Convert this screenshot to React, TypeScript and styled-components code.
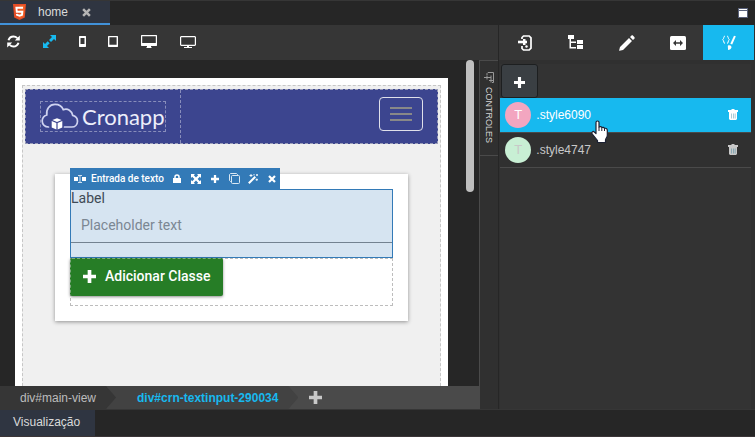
import React from "react";
import styled, { createGlobalStyle, css } from "styled-components";

const UI_FONT = '"Liberation Sans", Arial, sans-serif';
const APP_FONT = 'Roboto, "Open Sans", sans-serif';

const GlobalStyle = createGlobalStyle`
  *, *::before, *::after { box-sizing: border-box; }
  body { margin: 0; background: #262626; font-family: ${UI_FONT}; font-size: 12px; }
  button { font: inherit; color: inherit; border: 0; padding: 0; background: none; cursor: pointer; }
  svg { display: block; flex: none; }
`;

const Shell = styled.div`
  display: flex;
  flex-direction: column;
  height: 100vh;
  min-height: 400px;
  background: #262626;
  border-top: 1px solid #363636;
  border-bottom: 1px solid #3b3537;
  overflow: hidden;
`;

/* File tabs */
const FileBar = styled.header`
  display: flex;
  justify-content: space-between;
  align-items: stretch;
  height: 24px;
  flex: none;
  padding-right: 7px;
`;

const FileTab = styled.div`
  display: flex;
  align-items: center;
  height: 24px;
  padding: 0 19px 0 13px;
  background: #2f3541;
  border-bottom: 2px solid #4192d9;
  color: #dadada;
`;

const FileName = styled.span`
  margin: 0 14px 0 12px;
  line-height: 20px;
`;

const CloseButton = styled.button`
  color: #b5b5b5;
`;

const WindowButton = styled.button`
  align-self: center;
`;

/* Workspace */
const Workspace = styled.main`
  display: flex;
  flex: 1;
  min-height: 0;
  border-bottom: 1px solid #363636;
`;

const Editor = styled.section`
  display: flex;
  flex-direction: column;
  flex: 1;
  min-width: 0;
`;

const DeviceBar = styled.div`
  display: flex;
  align-items: center;
  gap: 19px;
  height: 35px;
  flex: none;
  padding: 0 0 2px 6px;
  background: #363636;
`;

const DeviceButton = styled.button<{ $active?: boolean; $width: number }>`
  display: flex;
  justify-content: center;
  align-items: center;
  width: ${(p) => p.$width}px;
  height: 24px;
  color: ${(p) => (p.$active ? "#17b9ef" : "#fff")};
`;

const EditorBody = styled.div`
  display: flex;
  flex: 1;
  min-height: 0;
`;

const CanvasColumn = styled.div`
  display: flex;
  flex-direction: column;
  flex: 1;
  min-width: 0;
`;

const Canvas = styled.div`
  display: flex;
  flex: 1;
  min-height: 0;
  overflow: hidden;
  padding-left: 15px;
`;

const Page = styled.div`
  display: flex;
  flex: 1;
  margin-top: 18px;
  padding: 7px 7px 0;
  background: #fff;
  font-family: ${APP_FONT};
`;

const View = styled.div`
  flex: 1;
  padding: 3px 2px;
  background: #f0f0f0;
  border: 1px dashed #c6c6c6;
  border-bottom: 0;
`;

const ScrollTrack = styled.div`
  width: 31px;
  padding-left: 18px;
`;

const ScrollThumb = styled.div`
  width: 8px;
  height: 132px;
  border-radius: 4px;
  background: #bfbfbf;
`;

const NavBar = styled.nav`
  display: flex;
  align-items: stretch;
  justify-content: space-between;
  height: 55px;
  background: #3c458f;
  border: 1px dashed #9a9db8;
`;

const BrandCell = styled.div`
  display: flex;
  align-items: center;
  padding: 0 14px;
  border-right: 1px dashed #888dbb;
`;

const Brand = styled.a`
  display: flex;
  align-items: center;
  gap: 3px;
  height: 31px;
  border: 1px dashed #888dbb;
  color: #eceefa;
  text-decoration: none;
`;

const BrandName = styled.span`
  font: 400 22px/28px Lato, sans-serif;
`;

const MenuButton = styled.button`
  display: flex;
  flex-direction: column;
  align-items: center;
  justify-content: center;
  gap: 4px;
  align-self: center;
  width: 44px;
  height: 34px;
  margin: 0 14px 5px 0;
  border: 1px solid #dfe0ea;
  border-radius: 4px;
`;

const MenuLine = styled.span`
  width: 22px;
  height: 2px;
  background: #888;
`;

const Card = styled.div`
  position: relative;
  margin: 30px 30px 0;
  padding: 15px;
  background: #fff;
  box-shadow: 0 1px 4px rgba(0, 0, 0, 0.4);
`;

const SelectionBar = styled.div`
  position: absolute;
  left: 15px;
  bottom: 100%;
  margin-bottom: -15px;
  display: flex;
  align-items: center;
  height: 21px;
  padding: 0 2px 0 4px;
  gap: 8px;
  background: #337ab7;
  color: #fff;
  font-size: 10px;
  font-weight: 500;
  white-space: nowrap;
`;

const SelectionName = styled.span`
  display: flex;
  align-items: center;
  gap: 5px;
`;

const SelectionButton = styled.button`
  display: flex;
  justify-content: center;
  width: 11px;
`;

const Field = styled.div`
  height: 69px;
  padding-bottom: 14px;
  background: #d6e4f1;
  border: 1px solid #337ab7;
  font-size: 14px;
`;

const FieldLabel = styled.label`
  display: block;
  line-height: 17px;
  color: #3f4a56;
`;

const FieldInput = styled.input`
  display: block;
  width: 100%;
  height: 36px;
  padding: 0 10px;
  border: 0;
  border-bottom: 1px solid #738290;
  border-radius: 0;
  background: none;
  outline: 0;
  font: 14px ${APP_FONT};
  color: #3f4a56;
  &::placeholder {
    color: #7b8793;
    opacity: 1;
  }
`;

const ActionArea = styled.div`
  height: 48px;
  border: 1px dashed #bdbdbd;
`;

const ActionButton = styled.button`
  display: flex;
  align-items: center;
  gap: 9px;
  height: 38px;
  margin: -1px 0 0 -1px;
  padding: 0 11px 2px 12px;
  border: 1px dashed transparent;
  border-left-color: #7fa87f;
  border-top-color: #7fa87f;
  border-radius: 2px;
  background: #267d26;
  color: #fff;
  font-size: 14px;
  font-weight: 500;
  box-shadow: 0 1px 3px rgba(0, 0, 0, 0.45);
`;

/* Breadcrumbs */
const Crumbs = styled.nav`
  display: flex;
  align-items: stretch;
  height: 23px;
  flex: none;
  background: #4a4a4a;
`;

const Crumb = styled.a<{ $current?: boolean }>`
  display: flex;
  align-items: center;
  text-decoration: none;
  clip-path: polygon(0 0, calc(100% - 10px) 0, 100% 50%, calc(100% - 10px) 100%, 0 100%);
  ${(p) =>
    p.$current
      ? css`
          margin-left: -10px;
          padding: 0 20px 0 31px;
          background: #424242;
          color: #17b9ef;
          font-weight: 700;
        `
      : css`
          z-index: 1;
          padding: 0 20px;
          background: #363636;
          color: #bdbdbd;
        `}
`;

const AddCrumb = styled.button`
  margin-left: 11px;
  color: #c8c8c8;
`;

/* Collapsed side strip */
const SideStrip = styled.aside`
  width: 19px;
  flex: none;
  background: #303030;
  border-left: 1px solid #4a4a4a;
`;

const StripTab = styled.button`
  display: flex;
  flex-direction: column;
  align-items: center;
  gap: 3px;
  width: 18px;
  height: 96px;
  padding-top: 11px;
  border-top: 1px solid #4a4a4a;
  border-bottom: 1px solid #4a4a4a;
  color: #d4d4d4;
  font-size: 9px;
`;

const StripLabel = styled.span`
  writing-mode: vertical-rl;
  line-height: 12px;
`;

/* Inspector */
const Inspector = styled.aside`
  display: flex;
  flex-direction: column;
  width: 34%;
  flex: none;
  background: #303030;
  border-left: 1px solid #262626;
  border-right: 1px solid #303030;
`;

const InspectorTabs = styled.div`
  display: grid;
  grid-template-columns: repeat(5, 1fr);
  height: 35px;
  flex: none;
  background: #363636;
`;

const InspectorTab = styled.button<{ $active?: boolean }>`
  display: flex;
  align-items: center;
  justify-content: center;
  color: #fff;
  background: ${(p) => (p.$active ? "#17b9ef" : "transparent")};
`;

const StylePanel = styled.div`
  flex: 1;
  margin: 4px 3px 0 1px;
  background: #333;
`;

const AddStyle = styled.button`
  display: flex;
  align-items: center;
  justify-content: center;
  width: 37px;
  height: 34px;
  margin-left: 1px;
  padding-top: 2px;
  border: 1px solid #1d1f20;
  border-radius: 3px;
  background: #3a3f43;
  color: #fff;
`;

const StyleList = styled.ul`
  margin: 0;
  padding: 0;
  list-style: none;
`;

const StyleRow = styled.li<{ $active?: boolean }>`
  position: relative;
  display: flex;
  align-items: center;
  height: 35px;
  padding: 0 13px 1px 5px;
  border-bottom: 1px solid #4a4a4a;
  background: ${(p) => (p.$active ? "#17b9ef" : "#303030")};
  color: ${(p) => (p.$active ? "#fff" : "#c8c8c8")};
`;

const Swatch = styled.span<{ $color: string }>`
  display: flex;
  align-items: center;
  justify-content: center;
  width: 26px;
  height: 26px;
  padding-bottom: 1px;
  margin-right: 5px;
  border-radius: 50%;
  background: ${(p) => p.$color};
  font-size: 13px;
`;

const StyleName = styled.span`
  flex: 1;
`;

const Pointer = styled.svg`
  position: absolute;
  left: 91px;
  top: 22px;
  z-index: 2;
  pointer-events: none;
`;

/* Bottom dock */
const Dock = styled.footer`
  display: flex;
  height: 26px;
  flex: none;
`;

const DockTab = styled.button`
  padding: 0 15px 2px 13px;
  background: #2f3541;
  color: #dadada;
`;

const HtmlIcon = () => (
  <svg width="13" height="16" viewBox="0 0 13 16">
    <path d="M0 0h13l-1.2 13.6L6.5 16l-5.3-2.4z" fill="#e44d26" />
    <path d="M6.5 1.3h5.2l-1 11.3-4.2 1.9z" fill="#f16529" />
    <path d="M10 3.8H3.4l.4 4h5.500l-.3 3-2.500.9-2.500-.9-.1-1" fill="none" stroke="#fff" strokeWidth="1.9" />
  </svg>
);

const WindowIcon = () => (
  <svg width="10" height="10" viewBox="0 0 10 10">
    <rect width="10" height="10" fill="#59617a" />
    <path d="M1 1h8v1H1zM1 3h8v6H1z" fill="#fff" />
  </svg>
);

const RefreshIcon = () => (
  <svg width="13" height="13" viewBox="0 0 13 13">
    <path d="M1.500 5.300C2.300 2.800 4.200 1.500 6.500 1.500c1.500 0 2.800.6 3.800 1.600M11.500 7.700c-.8 2.500-2.700 3.800-5 3.800-1.500 0-2.800-.6-3.800-1.600" fill="none" stroke="currentColor" strokeWidth="2" />
    <path d="M12.800.5v5H7.800zM.2 12.500v-5h5z" fill="currentColor" />
  </svg>
);

const ExpandIcon = () => (
  <svg width="13" height="13" viewBox="0 0 13 13" fill="currentColor">
    <path d="M7 0h6v6l-2-2-3 3-2-2 3-3zM6 13H0V7l2 2 2.700-2.700 2 2L4 11z" />
  </svg>
);

const PhoneIcon = () => (
  <svg width="7" height="11" viewBox="0 0 7 11">
    <path fill="currentColor" fillRule="evenodd" d="M.5 0h6l.5.5v10l-.5.5h-6L0 10.500V.5zM1.500 2v6h4V2z" />
  </svg>
);

const TabletIcon = () => (
  <svg width="10" height="11" viewBox="0 0 10 11">
    <path fill="currentColor" fillRule="evenodd" d="M.5 0h9l.5.5v10l-.5.5h-9L0 10.500V.5zM1.400 1.200v7.600h7.200V1.200z" />
  </svg>
);

const DesktopIcon = () => (
  <svg width="16" height="13" viewBox="0 0 16 13">
    <path fill="currentColor" fillRule="evenodd" d="M.5 0h15l.5.5v10l-.5.5H10v1l1 1H5l1-1v-1H.5l-.5-.5V.5zM1.200 1.200v6.900h13.600V1.200z" />
  </svg>
);

const ScreenIcon = () => (
  <svg width="16" height="12" viewBox="0 0 16 12">
    <path fill="currentColor" fillRule="evenodd" d="M1 0h14l1 1v8l-1 1H9v1h3v1H4v-1h3v-1H1L0 9V1zM1.200 1.200v7.600h13.600V1.200z" />
  </svg>
);

const CloudLogo = () => (
  <svg width="38" height="27" viewBox="0 0 38 27">
    <path
      d="M7.500 24C4 24 1.200 21.500 1.200 18c0-3 2-5.200 4.600-6C5 6 8.500 1.300 14 1.300c4 0 7 2 8.300 5.400 4.300-1.700 8.800 1 9.400 5.700 3 .8 4.800 3 4.800 5.800 0 3.400-2.500 5.800-5.700 5.800h-7.300"
      fill="none"
      stroke="#cfd3f0"
      strokeWidth="1.700"
      strokeLinecap="round"
    />
    <path d="M16 15.200l4.700 1.800-4.700 2-4.700-2zM10.700 18l4.700 2v6.500l-4.700-2zM21.300 18l-4.700 2v6.500l4.700-2z" fill="#fff" />
  </svg>
);

const TextInputIcon = () => (
  <svg width="12" height="8" viewBox="0 0 12 8">
    <path d="M0 2h4v4H0zM8 2h4v4H8z" fill="#fff" />
    <path d="M4 .5h4M6 .5v7M4 7.500h4" stroke="#cfe0ef" fill="none" />
  </svg>
);

const LockIcon = () => (
  <svg width="8" height="9" viewBox="0 0 8 9">
    <path d="M0 4h8v5H0z" fill="currentColor" />
    <path d="M2 4.500V3a2 2 0 0 1 4 0v1.500" fill="none" stroke="currentColor" strokeWidth="1.500" />
  </svg>
);

const MoveIcon = () => (
  <svg width="10" height="10" viewBox="0 0 10 10" fill="currentColor">
    <path d="M0 0h4L2.800 1.200 5 3.400l2.200-2.200L6 0h4v4L8.800 2.800 6.600 5l2.200 2.200L10 6v4H6l1.200-1.200L5 6.600 2.800 8.800 4 10H0V6l1.200 1.200L3.400 5 1.200 2.800 0 4z" />
  </svg>
);

const CloneIcon = () => (
  <svg width="11" height="11" viewBox="0 0 11 11" fill="none" stroke="#dbe8f3">
    <path d="M2.500 8.500h-1l-1-1v-6l1-1h6l1 1v1" />
    <rect x="2.500" y="2.500" width="8" height="8" rx="1" />
  </svg>
);

const WandIcon = () => (
  <svg width="10" height="10" viewBox="0 0 10 10">
    <path d="M.8 9.200L7.300 2.700" stroke="currentColor" strokeWidth="2" />
    <path d="M3 0v3M1.500 1.500h3M9 0v2M8 1h2M8.800 4.500v2.400M7.600 5.700H10M6 0v1.500" stroke="currentColor" strokeWidth=".9" />
  </svg>
);

const CrossIcon = ({ size }: { size: number }) => (
  <svg width={size} height={size} viewBox="0 0 8 8">
    <path d="M1 1l6 6M7 1L1 7" stroke="currentColor" strokeWidth="2.200" />
  </svg>
);

const PencilIcon = () => (
  <svg width="16" height="16" viewBox="0 0 16 16" fill="currentColor">
    <path d="M10 3l3 3-9 9-3.500.8c-.3 0-.4-.1-.4-.4L1 12zM11 2l1.300-1.300c.5-.5 1.300-.5 1.800 0l1.200 1.200c.5.5.5 1.300 0 1.800L14 5z" />
  </svg>
);

const LoginIcon = () => (
  <svg width="14" height="16" viewBox="0 0 14 16" fill="none" stroke="currentColor">
    <path d="M4 4V2.500L5.500 1h5.700L13 2.800v10.400L11.200 15H5.500L4 13.500V11" strokeWidth="1.700" />
    <path d="M0 7h9" strokeWidth="2.600" />
    <path d="M5 4h2.500v6H5z" fill="#fff" stroke="none" />
    <circle cx="8.500" cy="11.500" r="1.200" fill="currentColor" stroke="none" />
  </svg>
);

const TreeIcon = () => (
  <svg width="15" height="16" viewBox="0 0 15 16" fill="currentColor">
    <path d="M0 0h6v4H0zM9 5h6v4H9zM9 10h6v4H9zM1.500 4H3v2.500h5V8H3v4h5v1.500H1.500z" />
  </svg>
);

const WidthIcon = () => (
  <svg width="16" height="14" viewBox="0 0 16 14">
    <rect width="16" height="14" rx="1.500" fill="#fff" />
    <path d="M3 7l3-3v2.200h4V4l3 3-3 3V7.800H6V10z" fill="#363636" />
  </svg>
);

const BrushIcon = () => (
  <svg width="14" height="16" viewBox="0 0 14 16">
    <path d="M3 1C1.500 1 2.200 3.500.7 4.700 2.200 5.800 1.500 8.500 3 8.500M5 1c1.500 0 .8 2.500 2.300 3.700C5.800 5.800 6.500 8.500 5 8.500" fill="none" stroke="#fff" strokeWidth="1" />
    <path d="M12 .8l1.800.5-3.600 8.200-1.900-.8z" fill="#fff" />
    <path d="M5.800 10.700c1.600-1 3.900-.2 3.600 1.600-.3 1.700-1.600 2.700-3.300 2.700z" fill="#fff" />
  </svg>
);

const PlusIcon = ({ size }: { size: number }) => (
  <svg width={size} height={size} viewBox="0 0 12 12">
    <path d="M4.300 0h3.400v4.300H12v3.400H7.700V12H4.300V7.700H0V4.300h4.300z" fill="currentColor" />
  </svg>
);

const TrashIcon = () => (
  <svg width="10" height="11" viewBox="0 0 10 11">
    <path d="M3.500 0h3v1H10v2H0V1h3.500zM1 3h8v7l-1 1H2l-1-1z" fill="currentColor" />
    <path d="M3.500 4.500V9.500M5.500 4.500V9.500M7.200 4.500V9.500" stroke="#17708f" strokeOpacity=".45" strokeWidth=".8" />
  </svg>
);

const PlugIcon = () => (
  <svg width="10" height="12" viewBox="0 0 10 12" fill="none" stroke="#999">
    <path d="M3 3.500V1.500L4 .5h5.500v10H8M0 5.500h7M3 4v3.500M7 3.500v7M5 8.500h4" />
  </svg>
);

const HandPointer = () => (
  <Pointer width="18" height="24" viewBox="0 0 18 24" aria-hidden="true">
    <path
      d="M5 2.500C5 .5 8 .5 8 2.500V7c1-.8 2.600-.4 2.800.6 1-.6 2.400-.2 2.600.8 1.300-.5 2.900.2 2.900 1.900v5.200c0 1.700-1.800 3.200-1.800 4.500v2.500H6.500V20.500L1.300 14c-1.200-1.800.7-3.300 2-2L5 13.500z"
      fill="#fff"
      stroke="#1c2133"
      strokeWidth="1.200"
      strokeLinejoin="round"
    />
    <path d="M8 7v4M10.800 8v3M13.500 8.500v2.500" stroke="#1c2133" fill="none" />
  </Pointer>
);

const devices = [
  { label: "Atualizar", width: 14, icon: <RefreshIcon /> },
  { label: "Responsivo", width: 20, icon: <ExpandIcon />, active: true },
  { label: "Celular", width: 8, icon: <PhoneIcon /> },
  { label: "Tablet", width: 16, icon: <TabletIcon /> },
  { label: "Desktop", width: 18, icon: <DesktopIcon /> },
  { label: "Monitor", width: 22, icon: <ScreenIcon /> },
];

const selectionActions = [
  { label: "Bloquear", icon: <LockIcon /> },
  { label: "Expandir", icon: <MoveIcon /> },
  { label: "Adicionar", icon: <PlusIcon size={8} /> },
  { label: "Duplicar", icon: <CloneIcon /> },
  { label: "Editar", icon: <WandIcon /> },
  { label: "Remover", icon: <CrossIcon size={8} /> },
];

const inspectorTabs = [
  { label: "Fontes", icon: <LoginIcon /> },
  { label: "Estrutura", icon: <TreeIcon /> },
  { label: "Editar", icon: <PencilIcon /> },
  { label: "Dimensões", icon: <WidthIcon /> },
  { label: "Estilos", icon: <BrushIcon />, active: true },
];

const styles = [
  { name: ".style6090", color: "#f3a6c0", active: true },
  { name: ".style4747", color: "#c8efd4", active: false },
];

export default function App() {
  return (
    <Shell>
      <GlobalStyle />
      <FileBar>
        <FileTab>
          <HtmlIcon />
          <FileName>home</FileName>
          <CloseButton aria-label="Fechar">
            <CrossIcon size={9} />
          </CloseButton>
        </FileTab>
        <WindowButton aria-label="Maximizar">
          <WindowIcon />
        </WindowButton>
      </FileBar>

      <Workspace>
        <Editor>
          <DeviceBar>
            {devices.map((d) => (
              <DeviceButton key={d.label} aria-label={d.label} $width={d.width} $active={d.active}>
                {d.icon}
              </DeviceButton>
            ))}
          </DeviceBar>
          <EditorBody>
            <CanvasColumn>
              <Canvas>
                <Page>
                  <View>
                    <NavBar>
                      <BrandCell>
                        <Brand href="#">
                          <CloudLogo />
                          <BrandName>Cronapp</BrandName>
                        </Brand>
                      </BrandCell>
                      <MenuButton aria-label="Menu">
                        <MenuLine />
                        <MenuLine />
                        <MenuLine />
                      </MenuButton>
                    </NavBar>
                    <Card>
                      <SelectionBar>
                        <SelectionName>
                          <TextInputIcon />
                          Entrada de texto
                        </SelectionName>
                        {selectionActions.map((a) => (
                          <SelectionButton key={a.label} aria-label={a.label}>
                            {a.icon}
                          </SelectionButton>
                        ))}
                      </SelectionBar>
                      <Field>
                        <FieldLabel htmlFor="crn-textinput-290034">Label</FieldLabel>
                        <FieldInput id="crn-textinput-290034" placeholder="Placeholder text" />
                      </Field>
                      <ActionArea>
                        <ActionButton>
                          <PlusIcon size={13} />
                          Adicionar Classe
                        </ActionButton>
                      </ActionArea>
                    </Card>
                  </View>
                </Page>
                <ScrollTrack>
                  <ScrollThumb />
                </ScrollTrack>
              </Canvas>
              <Crumbs>
                <Crumb href="#main-view">div#main-view</Crumb>
                <Crumb href="#crn-textinput-290034" $current>
                  div#crn-textinput-290034
                </Crumb>
                <AddCrumb aria-label="Adicionar">
                  <PlusIcon size={13} />
                </AddCrumb>
              </Crumbs>
            </CanvasColumn>
            <SideStrip>
              <StripTab>
                <PlugIcon />
                <StripLabel>CONTROLES</StripLabel>
              </StripTab>
            </SideStrip>
          </EditorBody>
        </Editor>

        <Inspector>
          <InspectorTabs>
            {inspectorTabs.map((t) => (
              <InspectorTab key={t.label} aria-label={t.label} $active={t.active}>
                {t.icon}
              </InspectorTab>
            ))}
          </InspectorTabs>
          <StylePanel>
            <AddStyle aria-label="Adicionar estilo">
              <PlusIcon size={11} />
            </AddStyle>
            <StyleList>
              {styles.map((s) => (
                <StyleRow key={s.name} $active={s.active}>
                  <Swatch $color={s.color}>T</Swatch>
                  <StyleName>{s.name}</StyleName>
                  <button aria-label={`Excluir ${s.name}`}>
                    <TrashIcon />
                  </button>
                  {s.active && <HandPointer />}
                </StyleRow>
              ))}
            </StyleList>
          </StylePanel>
        </Inspector>
      </Workspace>

      <Dock>
        <DockTab>Visualização</DockTab>
      </Dock>
    </Shell>
  );
}
